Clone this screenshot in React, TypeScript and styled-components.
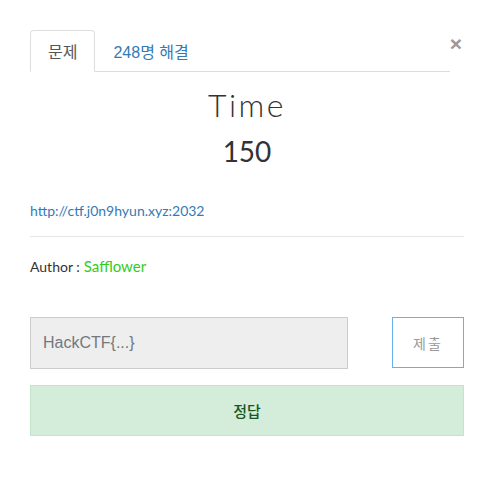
import React from "react";
import styled, { createGlobalStyle } from "styled-components";

const Global = createGlobalStyle`
  html, body { margin: 0; padding: 0; background: #fff; }
  body { font-family: Lato, "Noto Sans CJK KR", sans-serif; color: #333; }
  * { box-sizing: border-box; }
`;

const Modal = styled.div`
  width: 492px;
  padding: 30px 28px 30px 30px;
`;

const Header = styled.div`
  display: flex;
  align-items: flex-start;
`;

const Tabs = styled.div`
  display: flex;
  width: 420px;
  border-bottom: 1px solid #ddd;
`;

const Tab = styled.div<{ $active?: boolean }>`
  height: 42px;
  margin-bottom: -1px;
  padding: 0 17px;
  display: flex;
  align-items: center;
  font-family: "Liberation Sans", "Noto Sans CJK KR", sans-serif;
  font-size: 16px;
  color: ${(p) => (p.$active ? "#555" : "#337ab7")};
  border: 1px solid ${(p) => (p.$active ? "#ddd" : "transparent")};
  border-bottom-color: ${(p) => (p.$active ? "#fff" : "transparent")};
  border-radius: 4px 4px 0 0;
  background: ${(p) => (p.$active ? "#fff" : "transparent")};
`;

const Close = styled.div`
  margin-left: auto;
  margin-top: 3px;
  margin-right: 2px;
  font-family: "Liberation Sans", sans-serif;
  font-size: 21px;
  font-weight: 700;
  line-height: 1;
  color: #999;
`;

const Title = styled.h1`
  margin: 13px 0 0;
  text-align: center;
  font-weight: 300;
  font-size: 32px;
  line-height: 40px;
  color: #333;
  letter-spacing: 2.5px;
`;

const Points = styled.div`
  text-align: center;
  font-size: 28px;
  line-height: 34px;
  margin-top: 9px;
  color: #333;
`;

const Desc = styled.div`
  margin-top: 34px;
  font-size: 14px;
`;

const Link = styled.a`
  color: #337ab7;
  text-decoration: none;
`;

const Rule = styled.hr`
  border: 0;
  border-top: 1px solid #e5e5e5;
  margin: 17px 0 20px;
`;

const Author = styled.div`
  font-size: 14px;
  color: #333;
  display: flex;
  align-items: baseline;
  gap: 4px;
`;

const Name = styled.span`
  color: #33cc22;
  font-size: 15px;
`;

const Form = styled.div`
  display: flex;
  margin-top: 42px;
  justify-content: space-between;
`;

const Input = styled.input`
  width: 318px;
  height: 52px;
  background: #eee;
  border: 1px solid #ccc;
  padding: 0 12px;
  font-family: "Liberation Sans", Arial, sans-serif;
  font-size: 16px;
  color: #555;
  outline: none;
  &::placeholder { color: #73787d; }
`;

const Submit = styled.button`
  width: 72px;
  height: 51px;
  background: #fff;
  border: 1px solid #66b0f0;
  font-family: "Noto Sans CJK KR", sans-serif;
  font-size: 14px;
  color: #999;
  letter-spacing: 2px;
`;

const Answer = styled.div`
  margin-top: 16px;
  height: 51px;
  display: flex;
  align-items: center;
  justify-content: center;
  background: #d4ecda;
  border: 1px solid #c3e6cb;
  color: #155724;
  font-family: "Noto Sans CJK KR", sans-serif;
  font-size: 15px;
  font-weight: 500;
`;

export default function App() {
  return (
    <>
      <Global />
      <Modal>
        <Header>
          <Tabs>
            <Tab $active>문제</Tab>
            <Tab>248명 해결</Tab>
          </Tabs>
          <Close>×</Close>
        </Header>
        <Title>Time</Title>
        <Points>150</Points>
        <Desc>
          <Link href="#">http://ctf.j0n9hyun.xyz:2032</Link>
        </Desc>
        <Rule />
        <Author>
          Author : <Name>Safflower</Name>
        </Author>
        <Form>
          <Input placeholder="HackCTF{...}" />
          <Submit>제출</Submit>
        </Form>
        <Answer>정답</Answer>
      </Modal>
    </>
  );
}
